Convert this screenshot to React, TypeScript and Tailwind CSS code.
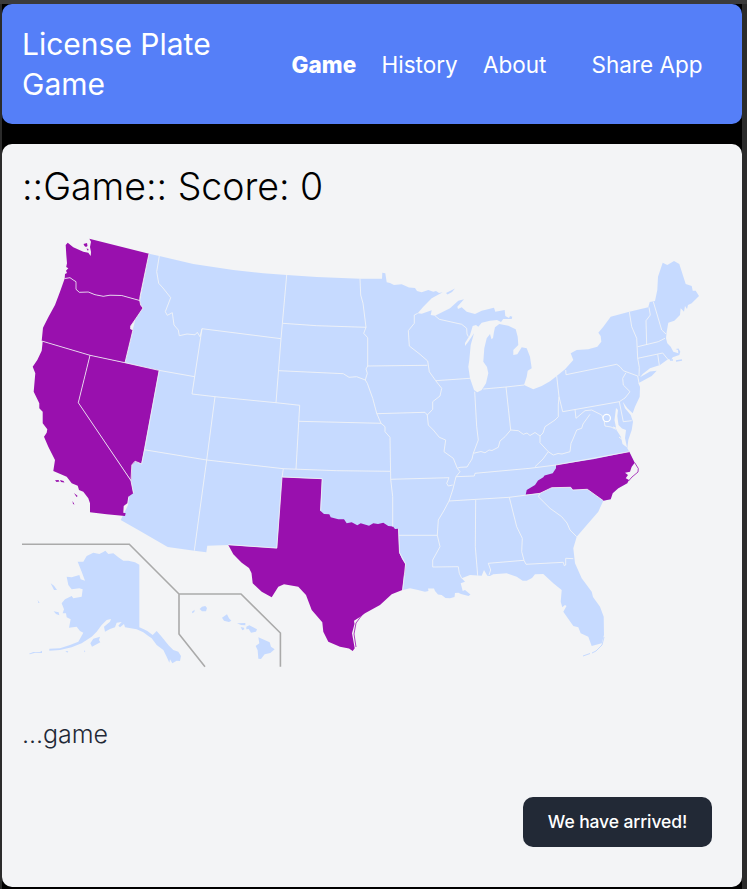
const LAND =
  "M149 253.7L159.3 256L193.3 264L233.3 270L263.3 273.3L286.7 275L316.7 277L360 278.7L382 278.7L382.3 272.7L385.3 273.3L386.7 282.3L390 283L394 285L401.7 284.3L409 287.5L415 288L417 291L421.7 292.3L428.3 290L433.3 291.7L436 291L439 293L442.7 292.3L431.7 298.3L423.3 306.7L417.7 313.3L421.7 313.7L431.7 310.3L430.7 315L435 315.7L450 308.3L458.3 300.7L464 299.3L457.3 306.7L458 309L461.7 307.3L466.7 311.7L475 314L481.7 310.7L494 307.7L495.3 311.7L504.7 310L505.3 316L509 318L510 316L512.3 316.7L511.7 319L503.3 319L501 322L497 320L490 320.7L481.7 322.7L478.3 326.7L476 325L472.7 326L470 335L465 343L465 346L468.3 341.7L474 333.3L470.7 345L469.3 360L468.3 366.7L470 378.3L474 390L477.3 392.3L481.7 390L486 383.3L488.3 373.3L487 367L483.3 361.7L484.3 348.3L486.7 338.3L490 334L491.5 339.3L493 338L494 331.7L495 327.3L499.3 324L508.3 325.7L515.7 329.3L517.7 336.7L518.3 345L513.3 350L513.3 355L517.3 354.3L521.7 347.3L526.7 348.3L530 356.7L531.7 368.3L527.7 370.7L526.7 376.7L524 385L533.3 389.3L541.7 386L550 381.2L556.7 376L565 369.3L573.3 360L570.7 353.3L576.7 350L588.3 349.3L597.3 346.7L601.3 341.7L600.7 336L598.3 332.7L603.3 326.7L610.7 316.7L620 314.3L629.3 311.7L648.3 307.3L649.7 302L655 301L657.3 290L658 276.7L662.7 262.7L667.3 265L674 261L679.3 264L685.7 284L691.7 286L692.7 290.7L695.7 290.7L699 296L691.7 303.3L688 305L687 309L685 306L684 311.7L680.7 308.3L680 315L674.3 320.7L668.3 322.7L666.7 331.7L666 338.3L667.3 343.3L670.7 346.7L673.3 351.7L678.3 353.3L678 350L675.5 349L678.5 348.5L680.3 351.7L679.3 355L672.7 357.3L671 360L668.3 359L660 365L650 368.3L642.7 374L640 377.3L650 371.5L656.7 370.7L651.7 376L638.3 383.3L640 386.7L639.7 396.7L635 406.7L632.7 413.3L627.3 408.3L622.7 401.7L625 408.3L630.7 415L633 421.7L631.7 430L628.3 440L627.3 448.3L629.3 451.7L634.7 462.7L631.7 466.7L625 473L627.3 483.3L618.3 488.3L612.7 493.3L610.7 499.3L603.3 500.7L598.3 511.7L588.3 523.3L576.7 536.7L573.3 548.3L575 563.3L581.7 578.3L591.7 591.7L593 597L600 606.7L603.7 616.7L604 635L601.7 643.3L591.7 646L588.3 636.7L580.7 633.3L578.3 627.3L573.3 626L563.3 611.7L566.5 606L565 605L562.3 607.3L560.7 601.7L561.7 590L553.3 583.3L543.3 574L535 574.3L532 578L526.7 580.7L522.7 580.7L516.7 576.7L506.7 573.3L493.3 574.3L490 576L487.3 575.7L484 570L481.7 575.7L470 575L461.7 578.3L465 581.7L460.7 583.3L462.7 591L465 590L470.5 594.5L468.5 596L461 594L458.3 592.7L455 593L454.5 597L450 598.3L445.5 598L441.7 595L438 594.5L435 591L434 588.5L428 588.5L428.5 591L425 591.7L418 590L410 588.3L402.7 590L300 580L228.3 545L207.3 545.7L206.3 552.3L194.3 550.7L167.7 547L138.3 530L120.7 520L128 505L131 480L125 362L140 300Z";

const WASHINGTON =
  "M89.3 238.7L149 253.7L140 296.7L139.7 300.5L121.7 295.5L110 295.2L103.3 296.3L95 294.7L88.3 292L79.3 292.3L76 289.3L76 281.7L73.3 280L70 277.7L64.7 278.5L65 274L67 273L66 270.7L68.3 268.3L66.2 267L67 263.3L66.3 255L65.7 245L67.7 242.7L73.3 247.3L83.3 251.7L88.3 252.7L90.7 256L91 252L90 247L91 241.7Z M83.5 244L87 243L87.5 246L86 247L84.5 246Z M86.5 248.5L88.5 249L88 251Z";
const OREGON =
  "M64.7 278.5L70 277.7L73.3 280L76 281.7L76 289.3L79.3 292.3L88.3 292L95 294.7L103.3 296.3L110 295.2L121.7 295.5L139.7 300.5L140.7 305L143 308L138.3 315L135 320L130.7 326L130.7 329L133 329.7L125 362.7L90 355.3L41.7 341L43 327.7L48.3 317.3L55 305L60 291.7Z";
const CALIFORNIA =
  "M42.7 341.3L90 355.3L78.3 402.7L131 480.7L133.3 493.3L128.3 496.7L127.3 503.3L123.7 506L123.3 512.7L125.7 513.3L125 516L106.7 514.3L90 512.3L90 503.3L88.3 498.3L83.3 491.7L79 490L77.7 485.7L71.7 483.3L66.7 476.7L53.3 471L55 460L48.3 446.7L44 436.7L46.7 432.7L47.3 429.3L42.7 423.3L42.7 411.7L39.3 408.3L39.3 403.3L33.7 391.7L35.3 373.3L32.7 366.7L37.3 360L41.7 350.7Z M55 480.3L58.5 480L59.5 481.5L56.5 482Z M60 480L63.5 481L64.5 482.5L61 482Z M74 493L77.7 496L76.5 497Z M72.5 501L74.5 504.5L73 504Z";
const NEVADA =
  "M90 355.3L159 370.3L144.3 449.3L141.3 464L139 462.7L135 461.7L132 465L131.3 480.7L78.3 402.7Z";
const TEXAS =
  "M282 477.3L322 479L320.3 510.7L324 514L329.3 514.3L330.7 517.3L338.3 519.3L344 519.3L346.7 523.3L351.7 522.3L357.3 525.3L360.7 523.3L369 525.7L373.3 523.3L378 524L383.3 522.8L388.3 526L393 526.5L395 529L398.3 528.7L399.3 552.7L402 559L405.3 564L405 573.3L404 576L402.3 590L391.7 594.3L380 605L365 613.3L360 617L354 620.7L354.5 624L352 633.3L354.7 648.3L352.7 651L349 648.5L340 646.7L328.3 641.7L323.3 631.7L322.3 622.3L311.7 610L306 595L298.3 586.7L284 584.3L278.3 586.7L275 592L271.7 597.3L261.7 591.7L252.7 583.3L251.5 573L249 568L241.7 562.7L233.3 554.3L228.3 545L277 548.3Z";
const NORTH_CAROLINA =
  "M556 465L593.3 459.3L629.3 451.7L634.7 462.7L631.7 466.7L630 471.7L625 472.7L628 475L625.7 478.3L629 480L627.3 483.3L618.3 488.3L612.7 493.3L610.7 499.3L603.3 500.7L587.3 489.3L572.7 490L570.7 487.3L551.7 487.7L540 493.3L525.7 494.7L526.7 490L535 485L538 480.5L543.3 477.3L544.5 475.5L552.7 473.3L556 468.3Z";

const BORDERS = [
  "M159.3 256L156.7 271.7L158.7 283.3L163 288L170.7 297.7L165.3 311.7L167.3 315.3L172.3 312.7L174 325L178.3 330L179.3 335.7L187 334L195 334.8L197.3 332.3L200 336.7L202 328.7L281 338.7",
  "M202 328.7L192 394L215 396.7L276 402.7L299.7 405.3L296 469",
  "M149 253.7L140 296.7L139.7 300.5L140.7 305L143 308L138.3 315L130.7 326L130.7 329L133 329.7L125 362.7L158.7 370.3L194.7 376.7",
  "M159.2 370.3L144.5 449.3L141.6 464L135 461.2L131.8 465L131 480.7L133.5 493.3",
  "M286.7 275L281 338.7L276 402.7",
  "M282.7 323.3L316.7 325.7L366 327.3",
  "M360 278.7L360.7 295L363 303.3L366 327.3L363.7 333.3L367.7 337.7L367.7 366L366 369L367.3 373.3L365.3 380",
  "M279 370.7L343.3 373.7L349 377.3L356.7 376.7L365.3 380L367.3 383.3L372.7 398.3L376.7 413.3L381 423.3L385 426.7L385 431.7L390 437.3L390.7 479.3L392.7 496.7L392.7 526.7",
  "M299 421.3L381 423.3",
  "M144 449.7L206.7 460L283.3 468.7L336.7 470.7L390 471.3",
  "M215 396.7L206.7 460L194.3 550.7",
  "M283.3 468.7L282.1 477L322.2 478.7L320.6 510.7",
  "M282 477.3L276.8 548.1L228.3 544.7",
  "M390.7 479.3L449 477.7L446.7 483.3L448.3 486L452.7 485",
  "M398.5 528.7L399.5 552.7L405.6 564L402.6 590",
  "M399 535.3L437.3 535.3",
  "M417.7 313.3L414.3 315L414.3 323.3L408.3 330.7L409.3 346L420 354.3L427.7 361L429.3 371.7L435.7 380.7L441.7 388.3L440 396L432.7 401.7L432.7 409.3L427.3 415L428.3 425L433.3 430L439.3 437.3L445.7 440L444 451.7L453.3 458.3L457.3 468.3L460 471.7L456 476.7L452.7 490L449 501L443.7 511L438.3 520L437.3 535.3L440 546.7L432.7 560L432.7 567L458.3 566.7L459.3 573.3L461.7 578.3",
  "M367.7 366L427.3 365.3",
  "M376.7 413.7L425 412.3L427.3 415",
  "M435.7 380.7L470 378.3",
  "M435 315.7L439.3 319.3L461.7 324.3L466.7 328.3L467 334L468.3 336.7",
  "M474.7 391.7L476.7 426.7L478.3 440L473.3 453.3L472 459L469.3 463.3L467 467L460 467.3L457.3 468.3",
  "M483.3 389L506 387L524 385",
  "M506 387L510.7 430",
  "M473.3 453.3L481 451.5L485 452.8L489 450L492 450.5L498.3 447.3L500 441L505 436.7L510.7 430L518.3 430.7L523.3 434.3L527 433L530 435.5L535 432.5L540 436L543 433L545 426.7L555 420L558.3 416.7L558.3 405L559 396.7",
  "M556.7 376L559 396.7L562.7 411.7L619.3 401.7",
  "M565.7 370L566 374.7L616.7 364.3L620 366.7L623.3 370.7L637.7 376L639 383",
  "M626 372.7L622.7 378.3L623.3 385L630 391.7L625 398L619.3 401.7L623.3 421.7L631.7 420.7",
  "M629.3 311.7L631.7 326.7L636.7 338.3L637.7 358.3L639.3 367.3L639 376",
  "M649 307.3L650.3 315L646 320.7L646.7 345",
  "M637.7 346.7L658.3 341.7L665 338.3",
  "M653.3 301.7L661.7 330L666 334",
  "M637.7 358.3L662.7 353L668 359.5",
  "M657.7 354.3L659.3 365",
  "M540 436L540 442.7L548.3 451.7L553.3 455L558 453.5L562 454L570 451.7L571 443.3L573 439L576.7 430L581.7 428.3L583 424L590 414.3",
  "M575 409.5L576 418.3L585 410.7L591.7 410L601.7 415L604 420L605 426L611 427L616 429.3",
  "M548.3 451.7L543 459L535 466.7",
  "M456 476.7L474.3 476L475 473.3L530 468.3L556 465L629.3 451.7",
  "M449 501L509.3 497.3L540 493.3L551.7 487.7L570.7 487.3L572.7 490L587.3 489.3L603.3 500.7",
  "M475.7 500L475.3 546.7L477.7 575.7",
  "M509.3 497.3L516.7 526.7L522.3 538.3L521.7 551.7L524 560.3L526 564.3L563.3 562.3L564.3 565.7L565.7 565L565.7 558.3L573.3 558.7",
  "M524 560.3L488.3 563.3L490.7 570L489 575",
  "M540 493.3L538.3 496.7L550 508.3L561.7 516.7L567 523L570 530L576.7 536.7",
];

const ALASKA =
  "M286 62L295 72L310 70L325 82L340 92L355 92L375 97L388 104L388 292L400 297L412 303L428 315L440 303L455 320L475 345L490 360L505 365L513 378L510 393L500 392L487 400L480 388L478 398L470 380L460 360L440 345L425 325L415 318L400 307L380 298L345 292L342 282L330 292L325 287L335 276L320 278L315 292L300 297L285 305L282 290L300 275L303 267L290 270L275 285L260 305L245 320L215 340L185 352L150 360L118 362L118 356L150 355L180 345L205 335L220 308L210 303L200 290L177 293L182 268L170 262L168 250L158 250L162 238L155 220L165 208L185 198L190 205L215 200L218 178L208 175L185 178L175 165L170 140L185 142L208 135L212 148L225 152L215 125L203 95L220 95L230 78L250 68L268 72L280 66Z M122 160L132 167L141 180L132 180Z M83 210L89 219L85 219Z M131 244L146 247L148 256L138 252Z M57 371L70 366L90 366L96 362L96 369L75 368L60 373Z M241 340L250 326L270 320L267 330L271 337L246 350Z M166 363L175 364L172 368Z M222 361L226 364L223 367Z M436 310L442 314L470 358L462 355L440 325Z";
const HAWAII =
  "M546 245L554 239L553 246L547 250Z M569 237L576 230L586 228L591 234L588 244L576 244Z M636 263L651 253L657 265L664 272L657 276L642 272Z M681 280L706 279L706 286L693 285Z M692 291L702 293L703 298L697 301Z M709 290L718 286L741 298L738 305L723 308L716 297L709 298Z M745 322L757 327L779 337L783 350L794 358L781 369L764 373L753 387L745 386L743 361L737 348L748 340Z";

function UsaMap() {
  const visited = [WASHINGTON, OREGON, CALIFORNIA, NEVADA, TEXAS, NORTH_CAROLINA];
  return (
    <svg viewBox="22 227 700 450" className="block h-[450px] w-[700px]" aria-label="Map of the United States">
      <path d={LAND} fill="#c6daff" />
      <path d="M446 293L449 291.5L455 288.5L452 292L447.5 294.5Z" fill="#c6daff" />
      <path d="M604 637L602 645L596 651L592 653M590 653.5L583 656" fill="none" stroke="#c6daff" strokeWidth="1" />
      <path d="M670 360L673 360M676 361L682 360" stroke="#c6daff" strokeWidth="1.5" />
      <path d="M616 408L618 410L617.3 416L618.5 425L622 428.5L626 430L625 438L627 447.5L622.5 444L621 437L616.5 430L614.5 420Z" fill="#f3f4f6" />
      <path d="M618 429L613 427M623 440L619 437" stroke="#f3f4f6" strokeWidth="1" />
      {visited.map((d) => (
        <path key={d} d={d} fill="#9910ae" />
      ))}
      <path d={BORDERS.join("")} fill="none" stroke="#f3f4f6" strokeWidth=".85" strokeLinejoin="round" />
      <path
        d="M64.7 278.5L70 277.7L73.3 280L76 281.7L76 289.3L79.3 292.3L88.3 292L95 294.7L103.3 296.3L110 295.2L121.7 295.5L139.7 300.5M41.7 341L90 355.3L125 362.7M90 355.3L78.3 402.7L131 480.7"
        fill="none"
        stroke="#f3f4f6"
        strokeWidth=".8"
      />
      <path d="M634.7 462.7L638.3 468.5L638 472L632 477L628.5 481M362 615L356 623L354 634L356 647" fill="none" stroke="#9910ae" strokeWidth=".8" />
      <circle cx="606.7" cy="418" r="3.7" fill="#c6daff" stroke="#fff" strokeWidth="1.2" />
      <g transform="translate(10 530) scale(.33333)" fill="#c6daff">
        <path d={ALASKA} />
        <path d={HAWAII} />
      </g>
      <path
        d="M22 544.2H129.3L179 594H241L280.4 633V666.7M179 594V634L205 666.7"
        fill="none"
        stroke="#aaa"
        strokeWidth="1.6"
      />
    </svg>
  );
}

export default function App() {
  return (
    <div className="h-[889px] w-[747px] bg-[#2b2b2b] font-['Inter',sans-serif]">
      <div className="h-1 bg-[#3b3b3b]" />
      <div className="ml-0.5 flex h-[885px] w-[740px] flex-col gap-5 bg-black">
        <header className="flex h-[120px] shrink-0 items-center rounded-[10px] bg-[#557ff8] pl-5 text-white">
          <div className="w-[269.5px] pr-12 text-[30px] leading-10">License Plate Game</div>
          <nav className="flex text-[22.5px] leading-[35px] whitespace-nowrap">
            <a className="w-[90px] font-extrabold tracking-[0.1px]">Game</a>
            <a className="w-[101.5px]">History</a>
            <a className="w-[108.5px]">About</a>
            <a>Share App</a>
          </nav>
        </header>
        <main className="flex h-[743px] shrink-0 flex-col rounded-[10px] bg-[#f3f4f6] px-5 pt-5">
          <h1 className="text-[37.5px] leading-[45px] font-[330] tracking-[-0.02px] text-black">::Game:: Score: 0</h1>
          <div className="mt-[18px]">
            <UsaMap />
          </div>
          <p className="mt-10 text-[25px] leading-[35px] font-[330] tracking-[-0.05px] text-[#1f2937]">...game</p>
          <div className="mt-[45px] flex justify-end pr-2.5">
            <button className="h-[50px] w-[189px] rounded-[10px] bg-[#222936] text-[17.5px] font-medium tracking-[-0.1px] text-white">
              We have arrived!
            </button>
          </div>
        </main>
      </div>
    </div>
  );
}
